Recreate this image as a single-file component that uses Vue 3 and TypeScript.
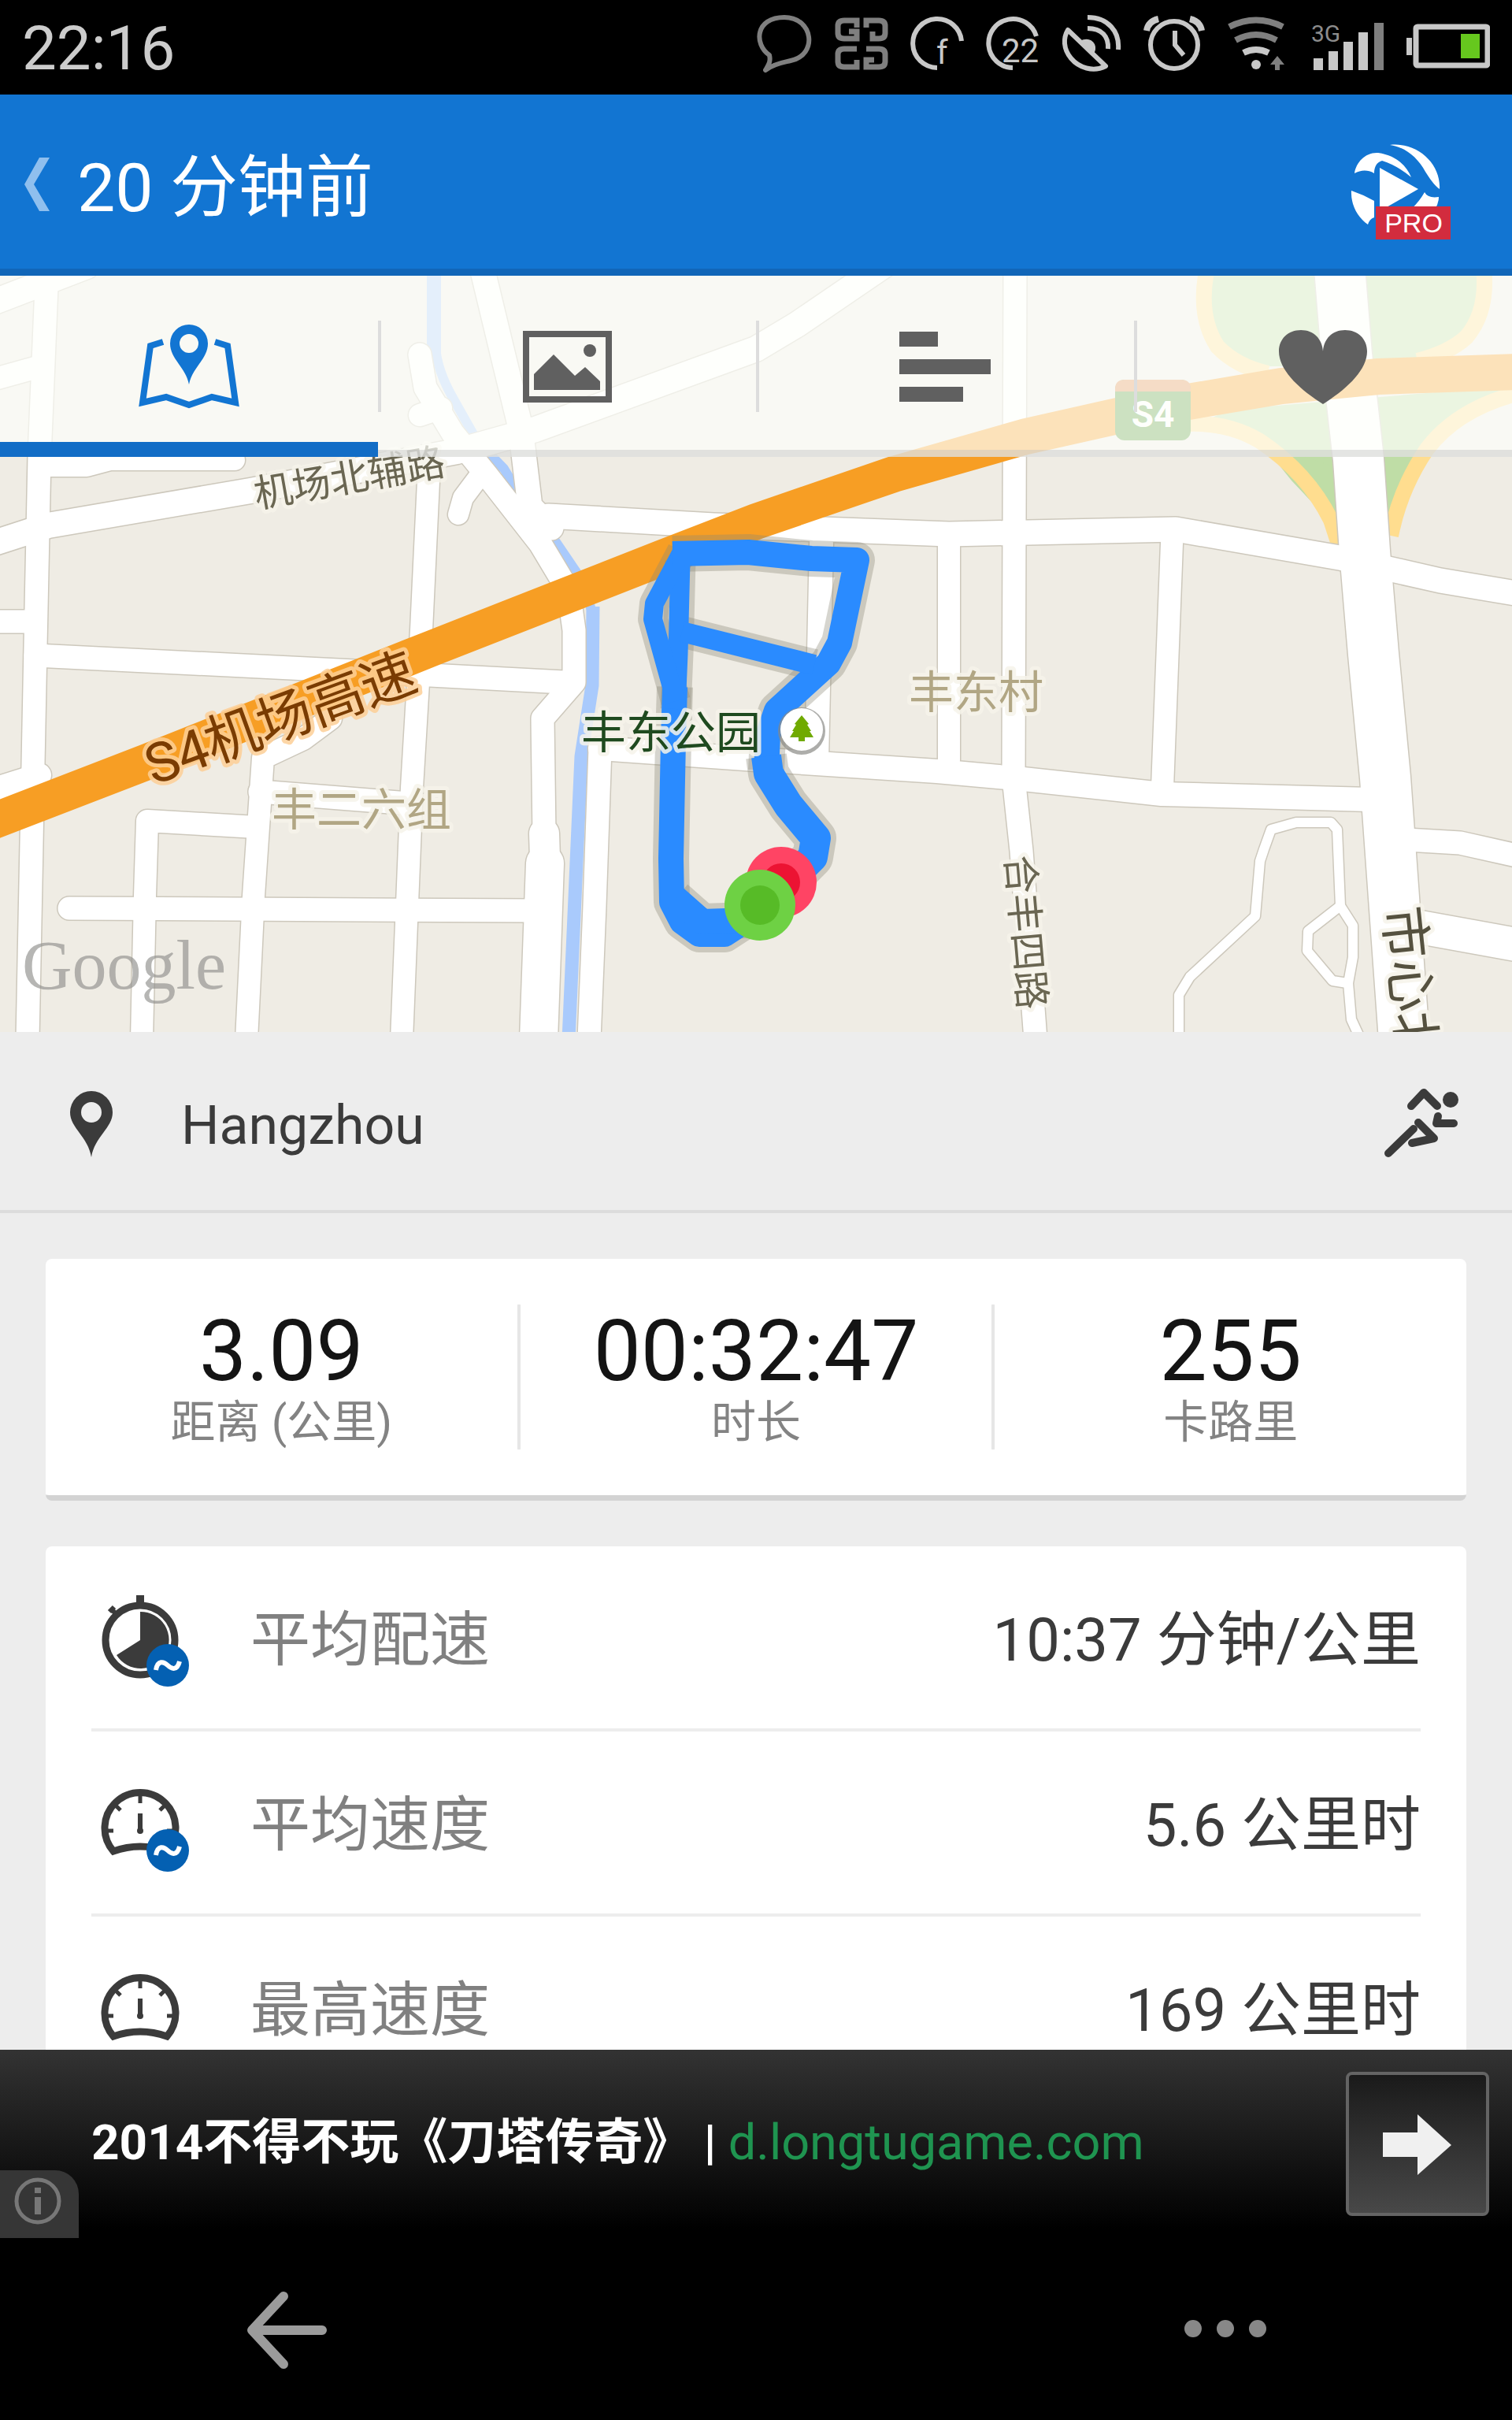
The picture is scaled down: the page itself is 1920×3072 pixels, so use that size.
<script setup lang="ts">
import { ref } from 'vue'

interface Road {
  d: string
  w: number
}

interface Stat {
  value: string
  label: string
}

interface Detail {
  icon: 'stopwatch' | 'gauge'
  average: boolean
  label: string
  value: string
}

const tabs = [
  { id: 'map', label: '地图' },
  { id: 'photos', label: '照片' },
  { id: 'splits', label: '分段' },
  { id: 'heart', label: '心率' },
]
const activeTab = ref('map')

const stats: Stat[] = [
  { value: '3.09', label: '距离 (公里)' },
  { value: '00:32:47', label: '时长' },
  { value: '255', label: '卡路里' },
]

const details: Detail[] = [
  { icon: 'stopwatch', average: true, label: '平均配速', value: '10:37 分钟/公里' },
  { icon: 'gauge', average: true, label: '平均速度', value: '5.6 公里时' },
  { icon: 'gauge', average: false, label: '最高速度', value: '169 公里时' },
]

const roads: Road[] = [
  { d: 'M60 340 L50 580 L45 820 L35 1320', w: 29 },
  { d: 'M-20 388 L110 338', w: 32 },
  { d: 'M-10 482 L55 464', w: 28 },
  { d: 'M-10 690 L61 667 L318 623 L580 573 L680 545 L960 443 L1012 412 L1125 335', w: 32 },
  { d: 'M50 592 L110 592 L140 584 L298 584', w: 26 },
  { d: 'M545 590 L535 800 L523 1000 L510 1320', w: 28 },
  { d: 'M533 450 L540 492 L575 550 L618 603 L686 690 L722 750 L729 800 L729 866 L689 912 L691 1060', w: 29 },
  { d: 'M533 527 L560 518', w: 28 },
  { d: 'M612 600 L588 632 L582 653', w: 26 },
  { d: 'M612 340 L661 543 L673 643 L700 670', w: 31 },
  { d: 'M691 1058 L692 1090', w: 38 },
  { d: 'M692 1096 L684 1320', w: 48 },
  { d: 'M696 655 L906 667 L1205 678 L1493 672 L1701 708 L1829 737 L1930 754', w: 31 },
  { d: 'M45 832 L450 852 L716 866', w: 29 },
  { d: 'M-10 789 H45', w: 29 },
  { d: 'M-10 1003 L50 984', w: 30 },
  { d: 'M420 912 L385 938 L334 962 L322 1137 L313 1320', w: 28 },
  { d: 'M330 1005 L520 1020', w: 29 },
  { d: 'M180 1320 L184 1137 L187 1042 L325 1050', w: 28 },
  { d: 'M88 1153 L680 1156', w: 29 },
  { d: 'M762 950 L755 1150 L748 1320', w: 29 },
  { d: 'M762 950 L960 964 L1190 979 L1290 988 L1475 1008 L1740 1015', w: 30 },
  { d: 'M1289 340 L1287 987 L1297 1080 L1315 1320', w: 29 },
  { d: 'M1205 690 L1205 965', w: 28 },
  { d: 'M1488 690 L1476 1000', w: 28 },
  { d: 'M1043 690 L1037 965', w: 30 },
  { d: 'M1770 1065 L1854 1070 L1930 1087', w: 29 },
  { d: 'M1770 1171 L1930 1200', w: 42 },
  {
    d: 'M1497 1320 L1497 1263 L1511 1240 L1594 1163 L1600 1093 L1605 1078 L1614 1053 L1646 1044 L1690 1044 L1698 1053 L1702 1150 L1718 1175 L1718 1215 L1712 1248 L1716 1294 L1728 1320',
    w: 12,
  },
  { d: 'M1702 1150 L1661 1182 L1660 1207 L1692 1245 L1711 1248', w: 12 },
  { d: 'M1701 340 L1710 450 L1725 583 L1733 700 L1744 830 L1759 987 L1783 1320', w: 64 },
]

const track: Road[] = [
  { d: 'M960 1160 L920 1186 L888 1186 L866 1170 L853 1145 L852 1090 L855 940 L857 872', w: 32 },
  { d: 'M950 1168 L892 1170 L858 1140', w: 32 },
  { d: 'M858 900 L861 830 L864 712', w: 25 },
  { d: 'M858 890 L829 786 L831 766 L866 700', w: 24 },
  { d: 'M854 703 L950 701 L1030 709 L1088 711 L1066 816 L1052 842 L986 902 L975 934 L973 978', w: 32 },
  { d: 'M973 960 L976 982 L1001 1022 L1036 1064 L1032 1088 L1000 1120', w: 38 },
  { d: 'M866 802 L1034 844', w: 26 },
]
</script>

<template>
  <div class="screen">
    <div class="status">
      <time class="clock">22:16</time>
      <div class="status-icons" aria-hidden="true">
        <svg width="72" height="120" viewBox="960 0 72 120">
          <path d="M977 70 C957 56 959 22 996 22 C1033 22 1039 70 1004 77 C996 79 984 80 972 89 C976 82 979 78 977 70 Z" class="dim-line" stroke-width="6" stroke-linejoin="round" />
        </svg>
        <svg width="68" height="120" viewBox="1060 0 68 120">
          <g class="dim-line" stroke-width="7">
            <path d="M1088 35 V26 H1072 Q1064 26 1064 33 V42 Q1064 49 1072 49 H1088 V40 H1078" />
            <path d="M1100 35 V26 H1116 Q1124 26 1124 33 V42 Q1124 49 1116 49 H1108 V40" />
            <path d="M1088 76 V85 H1072 Q1064 85 1064 78 V69 Q1064 62 1072 62 H1088" />
            <path d="M1100 62 H1116 Q1124 62 1124 69 V78 Q1124 85 1116 85 H1100 V76 H1110" />
          </g>
        </svg>
        <svg width="68" height="120" viewBox="1156 0 68 120">
          <path d="M1221 52 A31 31 0 1 0 1190 86" class="lit-line" stroke-width="6" />
          <text x="1189" y="81" class="glyph" font-size="42">f</text>
        </svg>
        <svg width="68" height="120" viewBox="1252 0 68 120">
          <path d="M1316 46 A31 31 0 1 0 1286 86" class="lit-line" stroke-width="6" />
          <text x="1272" y="79" class="glyph" font-size="42">22</text>
        </svg>
        <svg width="76" height="120" viewBox="1348 0 76 120">
          <g class="lit-line" stroke-width="6">
            <path d="M1356 38 L1404 84 C1388 92 1370 86 1360 74 C1350 62 1350 48 1356 38 Z" stroke-linejoin="round" />
            <path d="M1381 22 C1407 22 1422 40 1420 63" />
            <path d="M1381 36 C1399 36 1408 46 1407 62" />
          </g>
          <path d="M1371 52 Q1384 46 1390 56 Q1393 62 1388 70 Z" class="lit-fill" />
        </svg>
        <svg width="78" height="120" viewBox="1452 0 78 120">
          <g class="lit-line" stroke-width="6">
            <circle cx="1491" cy="57" r="30" />
            <path d="M1492 39 V57 L1503 70" />
            <path d="M1456 39 Q1458 27 1471 24 M1526 39 Q1524 27 1511 24" stroke-width="8" />
          </g>
        </svg>
        <svg width="76" height="120" viewBox="1558 0 76 120">
          <path d="M1561 34 Q1595 17 1629 34" class="dim-line" stroke-width="8" />
          <path d="M1569 51 Q1595 37 1621 51" class="dim-line" stroke-width="8" />
          <path d="M1579 67 Q1595 59 1611 67" class="lit-line" stroke-width="8" />
          <circle cx="1595" cy="82" r="6" class="lit-fill" />
          <path d="M1613 82 L1622 71 L1631 82 H1625 V89 H1619 V82 Z" class="dim-fill" />
        </svg>
        <svg width="96" height="120" viewBox="1662 0 96 120">
          <text x="1665" y="53" class="glyph network" font-size="30">3G</text>
          <path d="M1668 74 H1680 V89 H1668 Z M1687 65 H1699 V89 H1687 Z M1706 53 H1718 V89 H1706 Z M1725 41 H1737 V89 H1725 Z" class="lit-fill" />
          <path d="M1745 29 H1757 V89 H1745 Z" class="dim-fill" />
        </svg>
        <svg width="106" height="120" viewBox="1786 0 106 120">
          <rect x="1786" y="48" width="7" height="22" class="lit-fill" />
          <rect x="1798" y="34" width="91" height="49" rx="2" class="lit-line" stroke-width="7" />
          <rect x="1855" y="43" width="24" height="31" fill="#66c81e" />
        </svg>
      </div>
    </div>

    <header class="app-bar">
      <button type="button" class="bare back" aria-label="返回">
        <svg width="40" height="89" viewBox="28 187 40 89">
          <path d="M50 201 H63 L43 235 L63 269 H50 L31 235 Z" fill="#8fbfee" />
        </svg>
      </button>
      <h1 class="title">20 分钟前</h1>
      <button type="button" class="bare" aria-label="升级专业版">
        <svg width="136" height="161" viewBox="1712 150 136 161">
          <g fill="#fff">
            <path d="M1765 184 C1800 180 1830 208 1828 240 C1822 236 1815 226 1810 218 C1800 200 1785 187 1765 184 Z" />
            <path d="M1720 220 C1722 206 1734 193 1750 194 C1772 197 1786 210 1792 225 C1780 215 1768 208 1755 204 C1748 206 1745 212 1745 220 C1736 215 1728 216 1720 220 Z" />
            <path d="M1752 213 L1801 240 L1752 268 Z" />
            <path d="M1716 242 Q1731 247 1745 255 V276 Q1739 278 1737 285 C1724 276 1715 260 1716 242 Z" />
            <path d="M1809 244 Q1813 252 1827 250 Q1827 258 1822 266 H1791 Q1801 258 1809 244 Z" />
          </g>
          <rect x="1747" y="262" width="95" height="42" fill="#d22c3e" />
          <text x="1795" y="295" text-anchor="middle" class="pro" font-size="34">PRO</text>
        </svg>
      </button>
    </header>

    <main class="content">
      <section class="map-panel" aria-label="路线地图">
        <svg class="map" viewBox="0 350 1920 960">
          <rect x="0" y="350" width="1920" height="960" fill="#efece4" />

          <g fill="#bfdda6">
            <path d="M1532 350 H1885 V400 L1850 440 L1800 465 H1600 L1548 445 L1524 393 Z" />
            <path d="M1510 545 L1560 520 L1920 490 L1860 533 L1799 580 L1764 680 H1700 L1673 640 L1640 600 L1608 568 L1560 552 Z" />
            <path d="M1600 560 L1640 610 L1673 645 L1699 695 H1715 V600 Z" />
          </g>
          <path d="M1799 580 L1860 533 L1925 500 V700 H1764 Z" fill="#efece4" />
          <g fill="none" stroke="#ffdd8f" stroke-width="20">
            <path d="M1533 340 Q1520 400 1546 440 Q1570 465 1610 474" />
            <path d="M1884 340 Q1890 395 1862 428 Q1840 448 1800 458" />
            <path d="M1508 538 Q1560 536 1600 560 Q1660 600 1690 660 L1703 700" />
            <path d="M1925 500 Q1850 520 1812 570 Q1778 620 1766 680" />
          </g>

          <g fill="none" stroke="#a9cafc" stroke-linejoin="round">
            <path d="M551 340 V450" stroke-width="18" />
            <path d="M553 440 Q555 470 575 505 L606 560 L640 595 L670 645 L702 682 L738 735 L753 780" stroke-width="12" />
            <path d="M753 770 L752 870 L738 960 L722 1320" stroke-width="17" />
          </g>

          <g fill="none" stroke-linecap="round" stroke-linejoin="round">
            <path v-for="(road, i) in roads" :key="`edge-${i}`" :d="road.d" :stroke-width="road.w + 3" stroke="#cdc8bc" />
            <path v-for="(road, i) in roads" :key="`fill-${i}`" :d="road.d" :stroke-width="road.w" stroke="#fff" />
          </g>

          <path
            d="M-10 1043 L187 967 L551 822 L839 709 L960 662 L1135 602 L1303 554 L1468 517 L1627 490 L1750 478 L1930 472"
            fill="none"
            stroke="#f79e24"
            stroke-width="46"
          />

          <rect x="1416" y="482" width="96" height="77" rx="12" fill="#589b3a" />
          <path d="M1416 497 V494 Q1416 482 1428 482 H1500 Q1512 482 1512 494 V497 Z" fill="#e18a4b" />
          <text x="1464" y="542" text-anchor="middle" class="shield" font-size="46">S4</text>

          <g fill="none" stroke-linejoin="round">
            <path v-for="(part, i) in track" :key="`shade-${i}`" :d="part.d" :stroke-width="part.w + 14" stroke="#8a8676" stroke-opacity="0.35" />
            <path v-for="(part, i) in track" :key="`line-${i}`" :d="part.d" :stroke-width="part.w" stroke="#2a8bff" />
          </g>

          <text x="326" y="645" transform="rotate(-10 326 645)" class="place road-name" font-size="49">机场北辅路</text>
          <text x="195" y="997" transform="rotate(-20 195 997)" class="place highway-name" font-size="70">S4机场高速</text>
          <text x="1277" y="1087" transform="rotate(85 1277 1087)" class="place road-name" font-size="49">合丰四路</text>
          <text x="1757" y="1153" transform="rotate(84 1757 1153)" class="place avenue-name" font-size="67">市心北</text>
          <text x="738" y="950" class="place park-name" font-size="57">丰东公园</text>
          <text x="1154" y="899" class="place village-name" font-size="57">丰东村</text>
          <text x="345" y="1048" class="place village-name" font-size="57">丰二六组</text>

          <circle cx="1018" cy="928" r="30" fill="#8a8a86" fill-opacity="0.7" />
          <circle cx="1018" cy="926" r="27" fill="#fff" />
          <path d="M1018 908 L1027 919 L1025 920 L1030 928 H1028 L1033 936 H1022 V941 H1014 V936 H1003 L1008 928 H1006 L1011 920 L1009 919 Z" fill="#70aa00" />

          <circle cx="992" cy="1120" r="45" fill="#ff4464" />
          <circle cx="992" cy="1120" r="24" fill="#ec1333" />
          <circle cx="965" cy="1149" r="45" fill="#6ed144" />
          <circle cx="965" cy="1149" r="25" fill="#57bb27" />

          <text x="28" y="1255" class="google" font-size="88">Google</text>
        </svg>

        <nav class="tabs" aria-label="视图">
          <button
            v-for="tab in tabs"
            :key="tab.id"
            type="button"
            class="bare tab"
            :class="{ active: tab.id === activeTab }"
            :aria-label="tab.label"
            @click="activeTab = tab.id"
          >
            <svg v-if="tab.id === 'map'" width="136" height="120" viewBox="172 405 136 120">
              <path d="M207 434 L191 439 L181 511 L211 504 L240 514 L269 504 L299 511 L289 439 L273 434" fill="none" stroke="currentColor" stroke-width="8" />
              <path d="M240 488 C236 466 216 456 216 436 A24 24 0 0 1 264 436 C264 456 244 466 240 488 Z M240 424 A12 12 0 1 0 240 448 A12 12 0 1 0 240 424 Z" fill="currentColor" fill-rule="evenodd" />
            </svg>
            <svg v-else-if="tab.id === 'photos'" width="136" height="120" viewBox="652 405 136 120">
              <rect x="668" y="424" width="105" height="83" fill="none" stroke="currentColor" stroke-width="8" />
              <path d="M678 475 L703 450 L730 477 L743 466 L762 484 V495 H678 Z" fill="currentColor" />
              <circle cx="749" cy="445" r="8" fill="currentColor" />
            </svg>
            <svg v-else-if="tab.id === 'splits'" width="136" height="120" viewBox="1132 405 136 120">
              <path d="M1142 421 H1191 V440 H1142 Z M1142 456 H1258 V475 H1142 Z M1142 491 H1223 V510 H1142 Z" fill="currentColor" />
            </svg>
            <svg v-else width="136" height="120" viewBox="1612 405 136 120">
              <path d="M1680 513 C1650 494 1624 470 1624 446 C1624 430 1636 419 1652 419 C1668 419 1679 430 1680 446 C1681 430 1692 419 1708 419 C1724 419 1736 430 1736 446 C1736 470 1710 494 1680 513 Z" fill="currentColor" />
            </svg>
          </button>
        </nav>
      </section>

      <section class="location">
        <svg width="116" height="100" viewBox="58 1371 116 100" aria-hidden="true">
          <path d="M116 1467 C112 1441 89 1430 89 1410 A27 27 0 0 1 143 1410 C143 1430 120 1441 116 1467 Z M116 1397 A13 13 0 1 0 116 1423 A13 13 0 1 0 116 1397 Z" fill="#3b3b3b" fill-rule="evenodd" />
        </svg>
        <span class="city">Hangzhou</span>
        <svg width="104" height="100" viewBox="1754 1374 104 100" aria-hidden="true">
          <g fill="none" stroke="#3b3b3b" stroke-width="10" stroke-linecap="round" stroke-linejoin="round">
            <path d="M1792 1405 L1808 1388 L1825 1405" />
            <path d="M1801 1426 L1821 1446 L1793 1452" />
            <path d="M1795 1434 L1763 1465" />
            <path d="M1826 1418 L1824 1427 H1846" />
          </g>
          <circle cx="1842" cy="1397" r="10" fill="#3b3b3b" />
        </svg>
      </section>

      <div class="cards">
        <dl class="card stats">
          <div v-for="stat in stats" :key="stat.label" class="stat">
            <dd class="stat-value">{{ stat.value }}</dd>
            <dt class="stat-label">{{ stat.label }}</dt>
          </div>
        </dl>

        <dl class="card details">
          <div v-for="item in details" :key="item.label" class="detail">
            <svg width="136" height="129" viewBox="0 0 136 129" aria-hidden="true">
              <g v-if="item.icon === 'stopwatch'">
                <circle cx="62" cy="68" r="44" fill="none" stroke="#3b3b3b" stroke-width="9" />
                <path d="M62 68 V32 A36 36 0 1 1 32 87 Z" fill="#3b3b3b" />
                <path d="M57 11 H67 V24 H57 Z" fill="#3b3b3b" />
                <path d="M23 32 L29 26 M25 28 L34 38" stroke="#3b3b3b" stroke-width="6" />
              </g>
              <g v-else fill="none" stroke="#3b3b3b">
                <path d="M28 101 A45 45 0 1 1 96 101 Q62 89 28 101 Z" stroke-width="9" />
                <path d="M62 28 V40 M20 75 H28 M96 75 H104 M31 43 L37 49 M93 43 L87 49" stroke-width="5" />
                <path d="M62 53 V75" stroke-width="6" />
                <circle cx="62" cy="75" r="4" fill="#3b3b3b" stroke="none" />
              </g>
              <g v-if="item.average">
                <circle cx="97" cy="100" r="27" fill="#0460b2" />
                <path d="M82 106 C84 93 92 95 97 100 S109 107 112 95" fill="none" stroke="#fff" stroke-width="6" />
              </g>
            </svg>
            <dt class="detail-label">{{ item.label }}</dt>
            <dd class="detail-value">{{ item.value }}</dd>
          </div>
        </dl>
      </div>
    </main>

    <aside class="ad">
      <p class="ad-text">
        <strong>2014不得不玩《刀塔传奇》 | </strong><a href="#" class="ad-link">d.longtugame.com</a>
      </p>
      <button type="button" class="ad-go" aria-label="打开广告">
        <svg width="174" height="175" viewBox="4 4 174 175">
          <path d="M47 77 H91 V54 L134 93 L91 131 V108 H47 Z" fill="#f0f0f0" />
        </svg>
      </button>
      <button type="button" class="bare ad-info" aria-label="广告信息">
        <svg width="100" height="86" viewBox="0 0 100 86">
          <circle cx="48" cy="39" r="27" fill="none" stroke="#777" stroke-width="5" />
          <path d="M44 34 H52 V56 H44 Z M44 22 H52 V29 H44 Z" fill="#777" />
        </svg>
      </button>
    </aside>

    <nav class="system-nav" aria-label="系统导航">
      <button type="button" class="bare" aria-label="后退">
        <svg width="112" height="112" viewBox="308 2901 112 112">
          <path d="M360 2915 L320 2958 L360 3001 M322 2958 H409" fill="none" stroke="#9b9b9b" stroke-width="12" stroke-linecap="round" stroke-linejoin="round" />
        </svg>
      </button>
      <button type="button" class="bare" aria-label="更多">
        <svg width="112" height="112" viewBox="1500 2901 112 112">
          <g fill="#888">
            <circle cx="1515" cy="2956" r="11" />
            <circle cx="1556" cy="2956" r="11" />
            <circle cx="1597" cy="2956" r="11" />
          </g>
        </svg>
      </button>
    </nav>
  </div>
</template>

<style>
body {
  margin: 0;
  background: #000;
}
</style>

<style scoped>
.screen {
  display: flex;
  flex-direction: column;
  height: 100vh;
  overflow: hidden;
  background: #ededed;
  color: #3b3b3b;
  font-family: Roboto, "Noto Sans CJK SC", sans-serif;
}

svg {
  display: block;
  flex: none;
}

.bare {
  padding: 0;
  border: 0;
  background: none;
  cursor: pointer;
}

.status {
  display: flex;
  flex: none;
  align-items: center;
  justify-content: space-between;
  height: 120px;
  padding: 0 28px 0 28px;
  background: #000;
}

.clock {
  padding-top: 4px;
  color: #ccc;
  font-size: 78px;
  line-height: 120px;
}

.status-icons {
  display: flex;
  gap: 28px;
}

.dim-line {
  fill: none;
  stroke: #7f7f7f;
}

.dim-fill {
  fill: #7f7f7f;
}

.lit-line {
  fill: none;
  stroke: #c8c8c8;
}

.lit-fill {
  fill: #c8c8c8;
}

.glyph {
  fill: #c8c8c8;
  font-family: Roboto, sans-serif;
}

.network {
  fill: #8c8c8c;
}

.app-bar {
  display: flex;
  flex: none;
  align-items: center;
  padding: 0 72px 0 28px;
  height: 221px;
  border-bottom: 9px solid #1166b8;
  background: #1275d2;
}

.title {
  flex: 1;
  margin: 0;
  padding: 16px 0 0 30px;
  color: #fff;
  font-size: 86px;
  font-weight: 400;
  line-height: 120px;
}

.pro {
  fill: #fff;
  font-family: "Liberation Sans", sans-serif;
}

.content {
  flex: 1;
  min-height: 0;
  overflow: hidden;
}

.map-panel {
  position: relative;
}

.map {
  width: 100%;
}

.place {
  paint-order: stroke;
  stroke-linejoin: round;
  stroke: #f6f3ea;
  stroke-opacity: 0.85;
  stroke-width: 10px;
}

.road-name {
  fill: #6a6652;
}

.avenue-name {
  fill: #55513f;
}

.village-name {
  fill: #b1a684;
}

.park-name {
  fill: #1f4a1f;
}

.highway-name {
  fill: #7a3c02;
  stroke: #fdcf96;
}

.shield {
  fill: #fff;
  font-weight: 700;
}

.google {
  fill: #8f8f8c;
  fill-opacity: 0.65;
  font-family: "Liberation Serif", serif;
}

.tabs {
  position: absolute;
  top: 0;
  left: 0;
  right: 0;
  display: flex;
  height: 230px;
  background: rgba(253, 255, 251, 0.7);
  box-shadow: inset 0 -9px 0 rgba(190, 190, 190, 0.4);
}

.tab {
  display: flex;
  flex: 1;
  align-items: center;
  justify-content: center;
  background: linear-gradient(#ddd, #ddd) left center / 4px 116px no-repeat;
  color: #606060;
}

.tab:first-child {
  background: none;
}

.tab.active {
  box-shadow: inset 0 -19px 0 #126dc6;
  color: #1275d2;
}

.location {
  display: flex;
  align-items: center;
  height: 226px;
  padding: 0 62px 0 58px;
  border-bottom: 4px solid #dcdcdc;
}

.city {
  flex: 1;
  padding: 12px 0 0 56px;
  font-size: 68px;
  line-height: 96px;
}

.cards {
  display: flex;
  flex-direction: column;
  gap: 58px;
  padding: 58px;
}

.card {
  margin: 0;
  border-bottom: 7px solid #d3d3d3;
  border-radius: 8px;
  background: #fff;
}

.stats {
  display: flex;
  padding: 58px 0;
}

.stat {
  display: flex;
  flex: 1;
  flex-direction: column;
  box-sizing: border-box;
  height: 184px;
  border-right: 4px solid #e6e6e6;
  text-align: center;
}

.stat:last-child {
  border-right: 0;
}

.stat-value {
  margin: 0;
  color: #141414;
  font-size: 107px;
  line-height: 120px;
}

.stat-label {
  color: #838383;
  font-size: 57px;
  line-height: 60px;
}

.details {
  padding: 0 58px;
}

.detail {
  display: flex;
  align-items: center;
  height: 231px;
  border-bottom: 4px solid #ededed;
}

.detail-label {
  flex: 1;
  padding: 6px 0 0 66px;
  color: #808080;
  font-size: 76px;
  line-height: 112px;
}

.detail-value {
  margin: 0;
  padding-top: 6px;
  font-size: 76px;
  line-height: 112px;
}

.ad {
  position: relative;
  display: flex;
  flex: none;
  align-items: center;
  justify-content: space-between;
  height: 239px;
  padding: 0 29px 0 116px;
  background: linear-gradient(#333 0%, #000 95%);
}

.ad-text {
  margin: 0;
  padding-bottom: 4px;
  color: #fff;
  font-size: 62px;
  line-height: 96px;
  white-space: nowrap;
}

.ad-link {
  color: #1f9450;
  font-size: 63px;
  text-decoration: none;
}

.ad-go {
  padding: 0;
  border: 4px solid #646464;
  border-radius: 8px;
  background: linear-gradient(#1a1a1a, #484848);
  cursor: pointer;
}

.ad-info {
  position: absolute;
  left: 0;
  bottom: 0;
  border-radius: 0 30px 0 0;
  background: #363636;
}

.system-nav {
  display: flex;
  flex: none;
  align-items: center;
  justify-content: space-between;
  height: 231px;
  padding: 0 308px;
  background: #000;
}
</style>
